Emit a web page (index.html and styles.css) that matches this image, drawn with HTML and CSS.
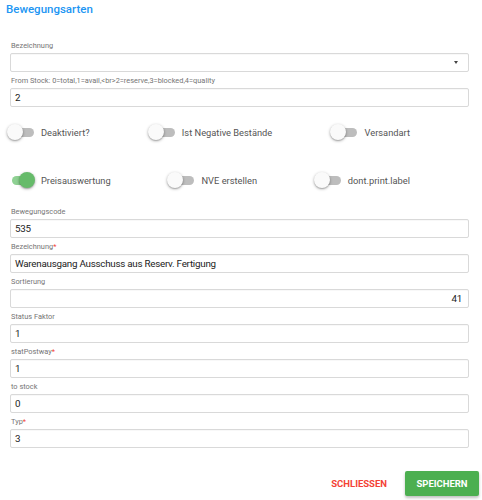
FILE: index.html
```html
<!DOCTYPE html>
<html>
<head>
<meta charset="utf-8">
<link rel="stylesheet" href="styles.css">
</head>
<body>
<div class="dialog">
  <h1 class="title">Bewegungsarten</h1>
  <div class="form">
    <div class="field">
      <label class="label">Bezeichnung</label>
      <div class="box select"><span class="value"></span><span class="arrow"></span></div>
    </div>
    <div class="field">
      <label class="label">From Stock: 0=total,1=avail,&lt;br&gt;2=reserve,3=blocked,4=quality</label>
      <div class="box"><span class="value">2</span></div>
    </div>

    <div class="switches">
      <div class="switch-row">
        <div class="switch"><span class="track"><span class="knob"></span></span><span class="slabel">Deaktiviert?</span></div>
        <div class="switch"><span class="track"><span class="knob"></span></span><span class="slabel">Ist Negative Bestände</span></div>
        <div class="switch"><span class="track"><span class="knob"></span></span><span class="slabel">Versandart</span></div>
      </div>
      <div class="switch-row">
        <div class="switch on"><span class="track"><span class="knob"></span></span><span class="slabel">Preisauswertung</span></div>
        <div class="switch"><span class="track"><span class="knob"></span></span><span class="slabel">NVE erstellen</span></div>
        <div class="switch"><span class="track"><span class="knob"></span></span><span class="slabel">dont.print.label</span></div>
      </div>
    </div>

    <div class="field">
      <label class="label">Bewegungscode</label>
      <div class="box"><span class="value">535</span></div>
    </div>
    <div class="field">
      <label class="label">Bezeichnung<span class="req">*</span></label>
      <div class="box"><span class="value">Warenausgang Ausschuss aus Reserv. Fertigung</span></div>
    </div>
    <div class="field">
      <label class="label">Sortierung</label>
      <div class="box right"><span class="value">41</span></div>
    </div>
    <div class="field">
      <label class="label">Status Faktor</label>
      <div class="box"><span class="value">1</span></div>
    </div>
    <div class="field">
      <label class="label">statPostway<span class="req">*</span></label>
      <div class="box"><span class="value">1</span></div>
    </div>
    <div class="field">
      <label class="label">to stock</label>
      <div class="box"><span class="value">0</span></div>
    </div>
    <div class="field">
      <label class="label">Typ<span class="req">*</span></label>
      <div class="box"><span class="value">3</span></div>
    </div>
  </div>
  <div class="actions">
    <button class="btn btn-text">SCHLIESSEN</button>
    <button class="btn btn-primary">SPEICHERN</button>
  </div>
</div>
</body>
</html>
```
FILE: styles.css
```css
* { box-sizing: border-box; }
html, body { margin: 0; padding: 0; background: #fff; }
body { font-family: Roboto, "Liberation Sans", sans-serif; color: #222; }

.dialog { width: 482px; height: 500px; position: relative; }

.title {
  margin: 0;
  padding: 1px 0 0 6px;
  height: 40px;
  font-size: 11.5px;
  line-height: 17px;
  font-weight: 500;
  color: #2196f3;
}

.form { padding: 0 13px 0 10px; }

.field { margin-bottom: 3px; }

.label {
  display: block;
  font-size: 7.4px;
  line-height: 12px;
  color: #757575;
  margin-bottom: 1px;
  padding-left: 1px;
}
.req { color: #f44336; }

.box {
  height: 19px;
  border: 1px solid #d9d9d9;
  border-radius: 2px;
  display: flex;
  align-items: center;
  padding: 0 6px 0 4px;
  font-size: 9.8px;
  letter-spacing: -0.25px;
  color: #222;
  box-shadow: inset 0 1px 1px rgba(0,0,0,0.03);
}
.box.right { justify-content: flex-end; }
.box.select { justify-content: space-between; padding-right: 10px; }
.arrow {
  width: 0; height: 0;
  border-left: 2.5px solid transparent;
  border-right: 2.5px solid transparent;
  border-top: 3px solid #444;
}

.switches { padding: 12px 0 16px 0; }
.switch-row {
  display: flex;
  justify-content: space-between;
  width: 400px;
  height: 20px;
  align-items: center;
}
.switch-row + .switch-row { margin-top: 28px; }

.switch { display: flex; align-items: center; }
.track {
  position: relative;
  width: 22px;
  height: 9px;
  margin-left: 2px;
  border-radius: 5px;
  background: #bdbdbd;
}
.knob {
  position: absolute;
  top: -3.5px;
  left: -5px;
  width: 16px;
  height: 16px;
  border-radius: 50%;
  background: #fafafa;
  box-shadow: 0 1px 3px rgba(0,0,0,0.35), 0 1px 1px rgba(0,0,0,0.12);
}
.switch.on .track { background: #8fd193; }
.switch.on .knob { left: auto; right: -1px; background: #66bb6a; }

.slabel {
  margin-left: 7px;
  font-size: 9.3px;
  color: #555;
}

.actions {
  display: flex;
  justify-content: flex-end;
  align-items: center;
  gap: 8px;
  padding: 20px 3px 0 0;
}
.btn {
  font-family: Roboto, "Liberation Sans", sans-serif;
  font-size: 9.5px;
  font-weight: 700;
  border: none;
  border-radius: 2px;
  height: 25px;
  padding: 0 10px;
  cursor: pointer;
}
.btn-text { background: transparent; color: #f44336; }
.btn-primary {
  background: #4caf50;
  color: #fff;
  min-width: 74px;
  box-shadow: 0 2px 3px rgba(0,0,0,0.25);
}
```
